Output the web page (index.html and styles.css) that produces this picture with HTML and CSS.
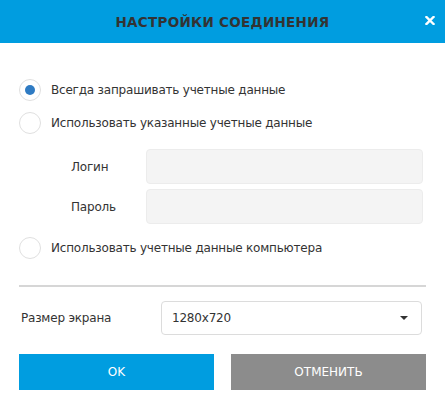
FILE: index.html
```html
<!DOCTYPE html>
<html lang="ru">
<head>
  <meta charset="UTF-8" />
  <title>Настройки соединения</title>
  <link rel="stylesheet" href="styles.css">
</head>
<body>
  <div class="dialog">
    <div class="dialog-head">
      <h1>Настройки соединения</h1>
      <svg class="close" width="10" height="9" viewBox="0 0 10 9">
        <path d="M1.5 1 L8.5 8 M8.5 1 L1.5 8" stroke="#fff" stroke-width="2.4" stroke-linecap="square" fill="none" />
      </svg>
    </div>

    <div class="dialog-body">
      <div class="options">
        <label class="radio-row">
          <span class="radio checked"></span>
          <span>Всегда запрашивать учетные данные</span>
        </label>
        <label class="radio-row">
          <span class="radio"></span>
          <span>Использовать указанные учетные данные</span>
        </label>

        <div class="creds">
          <div class="field">
            <span class="field-label">Логин</span>
            <div class="input"></div>
          </div>
          <div class="field">
            <span class="field-label">Пароль</span>
            <div class="input"></div>
          </div>
        </div>

        <label class="radio-row last">
          <span class="radio"></span>
          <span>Использовать учетные данные компьютера</span>
        </label>
      </div>

      <div class="divider"></div>

      <div class="screen-row">
        <span class="screen-label">Размер экрана</span>
        <div class="select">
          <span>1280x720</span>
          <span class="caret"></span>
        </div>
      </div>

      <div class="buttons">
        <button class="btn btn-ok">OK</button>
        <button class="btn btn-cancel">Отменить</button>
      </div>
    </div>
  </div>
</body>
</html>
```

FILE: styles.css
```css
body {
  margin: 0;
  padding: 0;
  background: #fff;
  font-family: 'DejaVu Sans', Verdana, sans-serif;
  font-size: 12px;
  letter-spacing: -0.2px;
  color: #333;
}
.dialog {
  width: 445px;
  height: 407px;
  background: #fff;
}
.dialog-head {
  height: 43px;
  background: #009de0;
  display: flex;
  align-items: center;
  justify-content: center;
  position: relative;
}
.dialog-head h1 {
  margin: 0;
  font-size: 13.5px;
  font-weight: bold;
  text-transform: uppercase;
  color: #333;
  letter-spacing: 0.3px;
}
.close {
  position: absolute;
  right: 10px;
  top: 16px;
}
.dialog-body {
  padding: 0 19px;
}
.options {
  padding-top: 36px;
}
.radio-row {
  display: flex;
  align-items: center;
  height: 22px;
  margin-bottom: 11px;
}
.radio-row.last {
  margin-bottom: 0;
}
.radio {
  width: 20px;
  height: 20px;
  border: 1px solid #e0e0e0;
  border-radius: 50%;
  margin-right: 10px;
  display: flex;
  align-items: center;
  justify-content: center;
  box-sizing: content-box;
}
.radio.checked::after {
  content: "";
  width: 10px;
  height: 10px;
  border-radius: 50%;
  background: #2f7bc3;
}
.creds {
  padding: 4px 0 13px 52px;
}
.field {
  display: flex;
  align-items: center;
  margin-bottom: 5px;
}
.field:last-child {
  margin-bottom: 0;
}
.field-label {
  width: 75px;
}
.input {
  flex: 1;
  height: 33px;
  margin-right: 3px;
  background: #f4f4f4;
  border: 1px solid #ececec;
  border-radius: 4px;
}
.divider {
  height: 2px;
  background: #d6d6d6;
  margin-top: 26px;
}
.screen-row {
  display: flex;
  align-items: center;
  margin-top: 14px;
}
.screen-label {
  width: 140px;
  padding-left: 2px;
}
.select {
  flex: 1;
  height: 32px;
  margin-right: 4px;
  border: 1px solid #dcdcdc;
  border-radius: 4px;
  display: flex;
  align-items: center;
  justify-content: space-between;
  padding: 0 13px 0 10px;
}
.caret {
  width: 0;
  height: 0;
  border-left: 4px solid transparent;
  border-right: 4px solid transparent;
  border-top: 4px solid #333;
}
.buttons {
  display: flex;
  justify-content: space-between;
  margin-top: 19px;
}
.btn {
  width: 195px;
  height: 36px;
  border: none;
  color: #fff;
  font-family: 'DejaVu Sans', Verdana, sans-serif;
  font-size: 12px;
  text-transform: uppercase;
  cursor: pointer;
}
.btn-ok {
  background: #009de0;
}
.btn-cancel {
  background: #8c8c8c;
}
```
